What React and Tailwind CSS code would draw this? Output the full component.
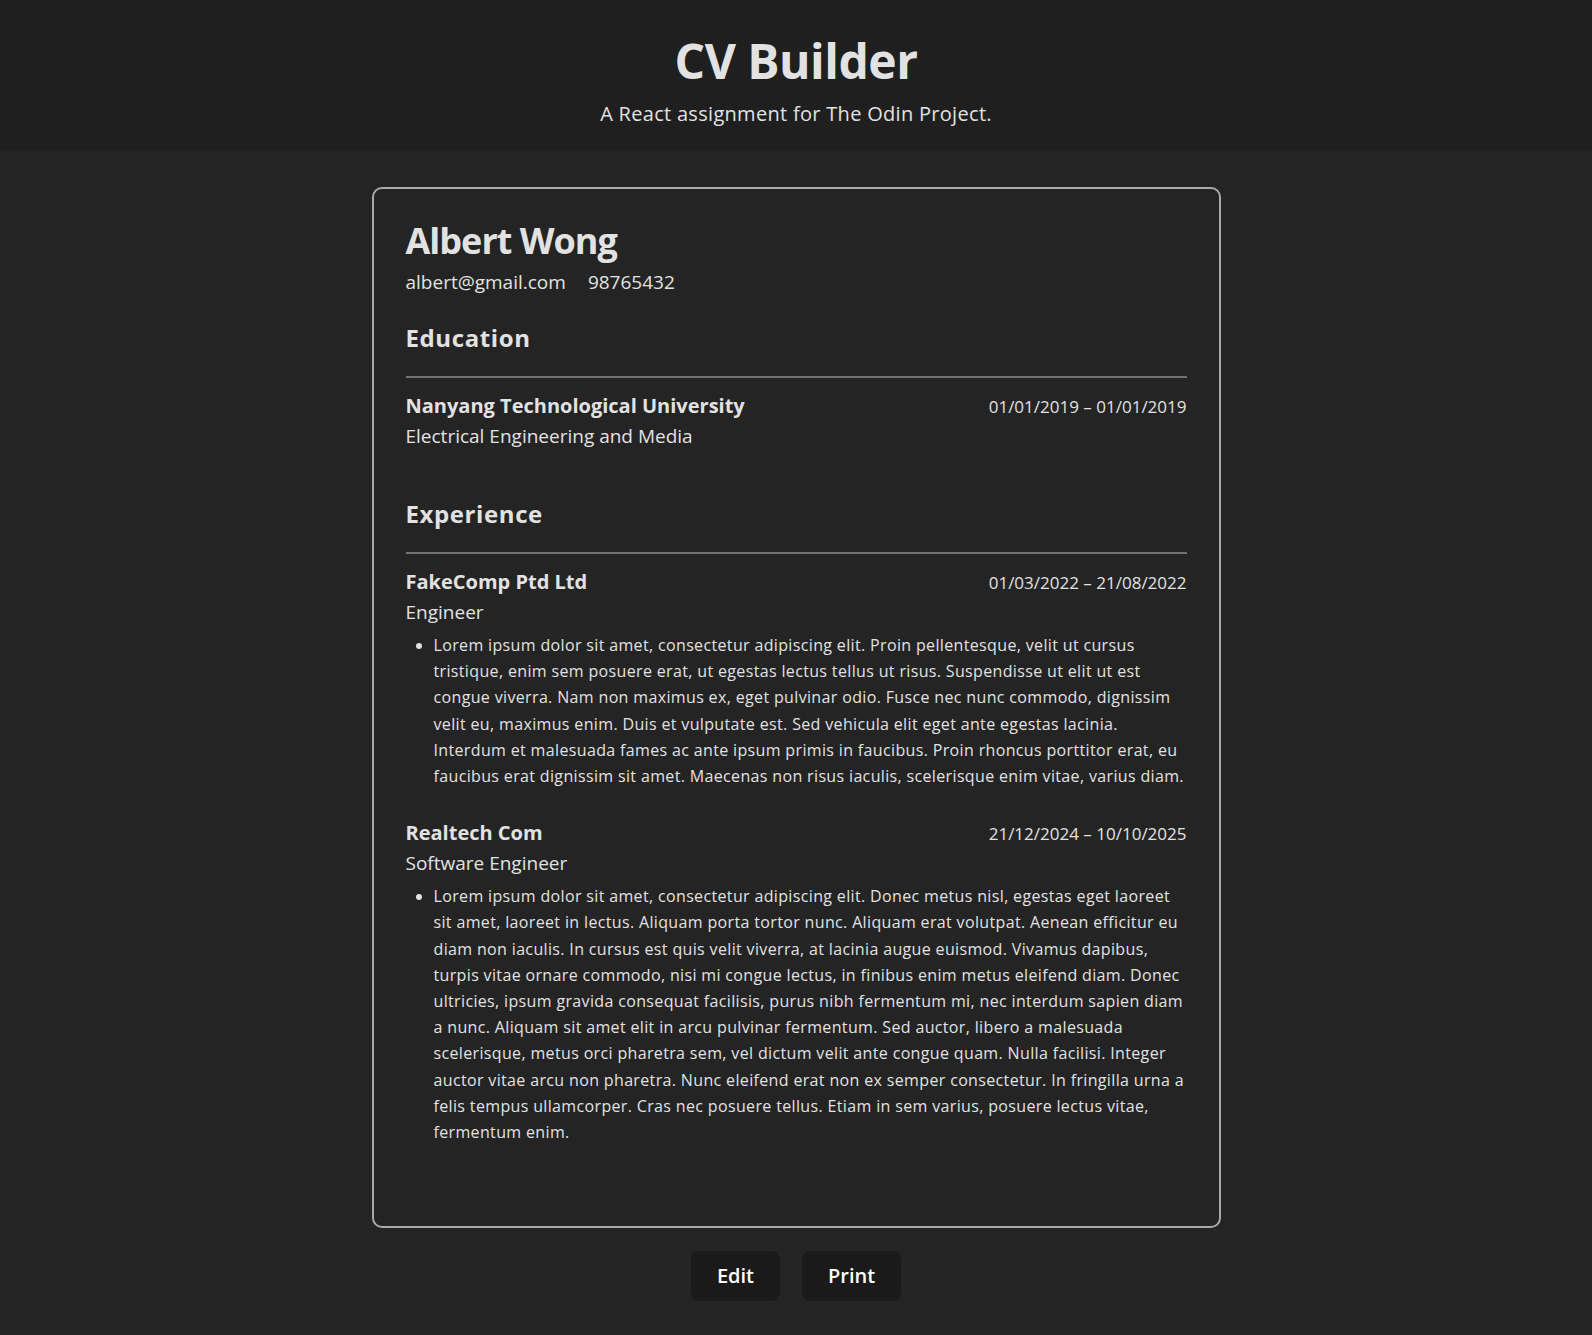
import React from 'react'

const education = [
  {
    school: 'Nanyang Technological University',
    title: 'Electrical Engineering and Media',
    start: '01/01/2019',
    end: '01/01/2019',
  },
]

const experience = [
  {
    company: 'FakeComp Ptd Ltd',
    position: 'Engineer',
    start: '01/03/2022',
    end: '21/08/2022',
    points: [
      'Lorem ipsum dolor sit amet, consectetur adipiscing elit. Proin pellentesque, velit ut cursus tristique, enim sem posuere erat, ut egestas lectus tellus ut risus. Suspendisse ut elit ut est congue viverra. Nam non maximus ex, eget pulvinar odio. Fusce nec nunc commodo, dignissim velit eu, maximus enim. Duis et vulputate est. Sed vehicula elit eget ante egestas lacinia. Interdum et malesuada fames ac ante ipsum primis in faucibus. Proin rhoncus porttitor erat, eu faucibus erat dignissim sit amet. Maecenas non risus iaculis, scelerisque enim vitae, varius diam.',
    ],
  },
  {
    company: 'Realtech Com',
    position: 'Software Engineer',
    start: '21/12/2024',
    end: '10/10/2025',
    points: [
      'Lorem ipsum dolor sit amet, consectetur adipiscing elit. Donec metus nisl, egestas eget laoreet sit amet, laoreet in lectus. Aliquam porta tortor nunc. Aliquam erat volutpat. Aenean efficitur eu diam non iaculis. In cursus est quis velit viverra, at lacinia augue euismod. Vivamus dapibus, turpis vitae ornare commodo, nisi mi congue lectus, in finibus enim metus eleifend diam. Donec ultricies, ipsum gravida consequat facilisis, purus nibh fermentum mi, nec interdum sapien diam a nunc. Aliquam sit amet elit in arcu pulvinar fermentum. Sed auctor, libero a malesuada scelerisque, metus orci pharetra sem, vel dictum velit ante congue quam. Nulla facilisi. Integer auctor vitae arcu non pharetra. Nunc eleifend erat non ex semper consectetur. In fringilla urna a felis tempus ullamcorper. Cras nec posuere tellus. Etiam in sem varius, posuere lectus vitae, fermentum enim.',
    ],
  },
]

const Section = ({ title, first, children }) => (
  <section className={first ? 'mt-[27px]' : 'mt-[48px]'}>
    <h2 className="text-[24px] leading-[32px] font-bold tracking-[0.6px]">{title}</h2>
    <div className="mt-[22px] h-[2px] bg-[#727272]" />
    {children}
  </section>
)

const Entry = ({ name, subtitle, start, end, points, last }) => (
  <div className={last ? '' : 'mb-[30px]'}>
    <div className="mt-[14px] flex items-baseline justify-between">
      <h3 className="text-[20px] leading-[28px] font-bold">{name}</h3>
      <span className="text-[17px] leading-[28px]">
        {start} – {end}
      </span>
    </div>
    <p className="mt-px text-[19px] leading-[28px]">{subtitle}</p>
    {points && (
      <ul className="mt-[6px] list-disc pl-[28px] text-[16px] leading-[26.2px] tracking-[0.35px]">
        {points.map((point, i) => (
          <li key={i}>{point}</li>
        ))}
      </ul>
    )}
  </div>
)

export default function App() {
  return (
    <div className="min-h-screen bg-[#242424] text-[#e2e2e2] font-['Open_Sans',sans-serif]">
      <header className="h-[150px] bg-[#1f1f1f] pt-[32px] text-center">
        <h1 className="text-[48px] leading-[58px] font-bold tracking-[-0.5px]">CV Builder</h1>
        <p className="mt-[10px] text-[20px] leading-[28px] tracking-[0.3px]">
          A React assignment for The Odin Project.
        </p>
      </header>

      <main className="flex flex-col items-center pt-[37px] pb-[36px]">
        <div className="w-[849px] rounded-[10px] border-2 border-[#a9a9a9] px-[32px] pt-[30px] pb-[81px]">
          <h1 className="text-[36px] leading-[44px] font-bold tracking-[-1px]">Albert Wong</h1>
          <div className="mt-[6px] flex gap-[22px] text-[19px] leading-[26px]">
            <span>albert@gmail.com</span>
            <span>98765432</span>
          </div>

          <Section title="Education" first>
            {education.map((item, i) => (
              <Entry
                key={i}
                name={item.school}
                subtitle={item.title}
                start={item.start}
                end={item.end}
                last={i === education.length - 1}
              />
            ))}
          </Section>

          <Section title="Experience">
            {experience.map((item, i) => (
              <Entry
                key={i}
                name={item.company}
                subtitle={item.position}
                start={item.start}
                end={item.end}
                points={item.points}
                last={i === experience.length - 1}
              />
            ))}
          </Section>
        </div>

        <div className="mt-[23px] flex gap-[22px]">
          <button className="h-[50px] rounded-[8px] bg-[#1a1a1a] px-[26px] text-[20px] font-semibold text-white">
            Edit
          </button>
          <button className="h-[50px] rounded-[8px] bg-[#1a1a1a] px-[26px] text-[20px] font-semibold text-white">
            Print
          </button>
        </div>
      </main>
    </div>
  )
}
